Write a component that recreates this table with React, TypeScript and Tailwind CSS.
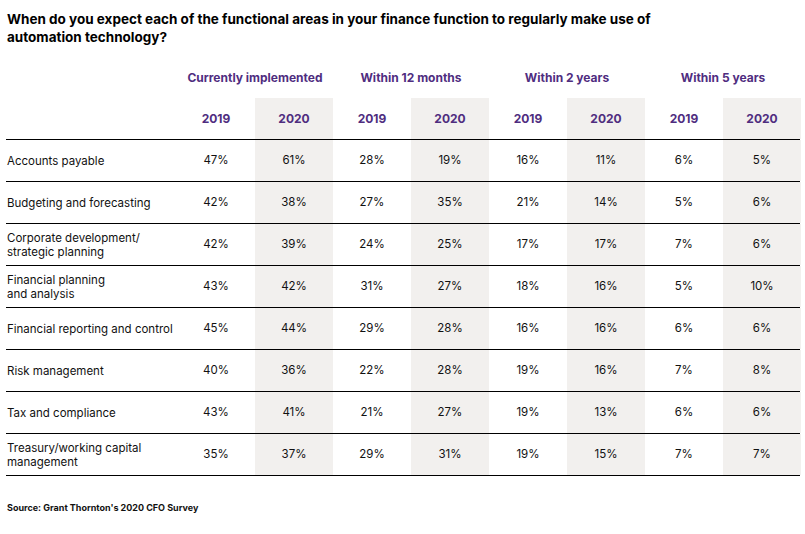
import React from "react";

const rows: [string, string[]][] = [
  ["Accounts payable", ["47%", "61%", "28%", "19%", "16%", "11%", "6%", "5%"]],
  ["Budgeting and forecasting", ["42%", "38%", "27%", "35%", "21%", "14%", "5%", "6%"]],
  ["Corporate development/\nstrategic planning", ["42%", "39%", "24%", "25%", "17%", "17%", "7%", "6%"]],
  ["Financial planning\nand analysis", ["43%", "42%", "31%", "27%", "18%", "16%", "5%", "10%"]],
  ["Financial reporting and control", ["45%", "44%", "29%", "28%", "16%", "16%", "6%", "6%"]],
  ["Risk management", ["40%", "36%", "22%", "28%", "19%", "16%", "7%", "8%"]],
  ["Tax and compliance", ["43%", "41%", "21%", "27%", "19%", "13%", "6%", "6%"]],
  ["Treasury/working capital\nmanagement", ["35%", "37%", "29%", "31%", "19%", "15%", "7%", "7%"]],
];

const groups = ["Currently implemented", "Within 12 months", "Within 2 years", "Within 5 years"];

export default function App() {
  return (
    <div className="w-[805px] h-[534px] bg-white text-[#111] overflow-hidden" style={{ fontFamily: "Inter, 'Noto Sans', sans-serif" }}>
      <div className="pl-[7px] pt-[10px] text-[13.5px] font-bold leading-[18px] text-black w-[700px]">
        When do you expect each of the functional areas in your finance function to regularly make use of automation technology?
      </div>
      <div className="ml-[6px] w-[794px] mt-[12px]">
        <div className="grid grid-cols-[171px_repeat(4,156px)] h-[40px] items-center">
          <div />
          {groups.map((g) => (
            <div key={g} className="text-center text-[12px] font-bold text-[#4f2d7f]">{g}</div>
          ))}
        </div>
        <div className="grid grid-cols-[171px_repeat(8,78px)] h-[42px] border-b border-black">
          <div />
          {Array.from({ length: 4 }).map((_, i) => (
            <React.Fragment key={i}>
              <div className="flex items-center justify-center text-[12px] font-bold text-[#4f2d7f]">2019</div>
              <div className="flex items-center justify-center text-[12px] font-bold text-[#4f2d7f] bg-[#f2f0ee]">2020</div>
            </React.Fragment>
          ))}
        </div>
        {rows.map(([label, vals]) => (
          <div key={label} className="grid grid-cols-[171px_repeat(8,78px)] h-[42px] border-b border-black">
            <div className="flex items-center pl-px text-[11.5px] leading-[14px] whitespace-pre-line">{label}</div>
            {vals.map((v, i) => (
              <div key={i} className={`flex items-center justify-center text-[11.5px] ${i % 2 === 1 ? "bg-[#f2f0ee]" : ""}`}>{v}</div>
            ))}
          </div>
        ))}
      </div>
      <div className="pl-[7px] mt-[25px] text-[9px] font-bold text-[#111]">Source: Grant Thornton's 2020 CFO Survey</div>
    </div>
  );
}
